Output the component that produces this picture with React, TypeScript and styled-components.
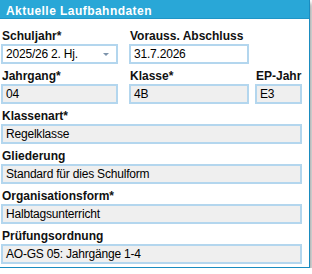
import React from "react";
import styled, { createGlobalStyle } from "styled-components";

const GlobalStyle = createGlobalStyle`
  html, body {
    margin: 0;
    padding: 0;
    background: #fff;
  }
  body {
    font-family: "Liberation Sans", Arial, sans-serif;
  }
`;

const Panel = styled.div`
  width: 311px;
  margin-left: -1px;
  box-sizing: border-box;
  border: 1px solid #1a8cc0;
  border-top: none;
  background: #fff;
  box-shadow: 2px 3px 4px rgba(0, 0, 0, 0.35);
`;

const Header = styled.div`
  height: 19px;
  box-sizing: border-box;
  padding: 4px 6px 0;
  background: #29a7d7;
  border-bottom: 1px solid #1f95c6;
  color: #fff;
  font-size: 12px;
  line-height: 14px;
  font-weight: bold;
  letter-spacing: 0.45px;
`;

const Body = styled.div`
  display: flex;
  flex-direction: column;
  gap: 5px;
  padding: 10px 7px 3px 1px;
`;

const Row = styled.div`
  display: flex;
`;

const Field = styled.div<{ $w?: number; $ml?: number }>`
  display: flex;
  flex-direction: column;
  width: ${(p) => (p.$w ? `${p.$w}px` : "auto")};
  flex: ${(p) => (p.$w ? "none" : "1")};
  margin-left: ${(p) => p.$ml ?? 0}px;
`;

const Label = styled.div`
  height: 14px;
  margin-bottom: 1px;
  padding-left: 1px;
  font-size: 12px;
  line-height: 14px;
  font-weight: bold;
  color: #111;
  white-space: nowrap;
`;

const Box = styled.div<{ $white?: boolean }>`
  position: relative;
  height: 20px;
  box-sizing: border-box;
  border: 2px solid #b3d6ee;
  background: ${(p) => (p.$white ? "#fff" : "#efefef")};
  padding: 0 3px;
  font-size: 12px;
  line-height: 16px;
  letter-spacing: -0.2px;
  color: #000;
  white-space: nowrap;
  overflow: hidden;
`;

const Arrow = styled.span`
  position: absolute;
  right: 7px;
  top: 7px;
  width: 0;
  height: 0;
  border-left: 3px solid transparent;
  border-right: 3px solid transparent;
  border-top: 3px solid #7d93ab;
`;

export default function App() {
  return (
    <>
      <GlobalStyle />
      <Panel>
        <Header>Aktuelle Laufbahndaten</Header>
        <Body>
          <Row>
            <Field $w={117}>
              <Label>Schuljahr*</Label>
              <Box $white>
                2025/26 2. Hj.
                <Arrow />
              </Box>
            </Field>
            <Field $w={120} $ml={11}>
              <Label>Vorauss. Abschluss</Label>
              <Box $white>31.7.2026</Box>
            </Field>
          </Row>
          <Row>
            <Field $w={117}>
              <Label>Jahrgang*</Label>
              <Box>04</Box>
            </Field>
            <Field $w={120} $ml={11}>
              <Label>Klasse*</Label>
              <Box>4B</Box>
            </Field>
            <Field $ml={6}>
              <Label>EP-Jahr</Label>
              <Box>E3</Box>
            </Field>
          </Row>
          <Field>
            <Label>Klassenart*</Label>
            <Box>Regelklasse</Box>
          </Field>
          <Field>
            <Label>Gliederung</Label>
            <Box>Standard für dies Schulform</Box>
          </Field>
          <Field>
            <Label>Organisationsform*</Label>
            <Box>Halbtagsunterricht</Box>
          </Field>
          <Field>
            <Label>Prüfungsordnung</Label>
            <Box>AO-GS 05: Jahrgänge 1-4</Box>
          </Field>
        </Body>
      </Panel>
    </>
  );
}
